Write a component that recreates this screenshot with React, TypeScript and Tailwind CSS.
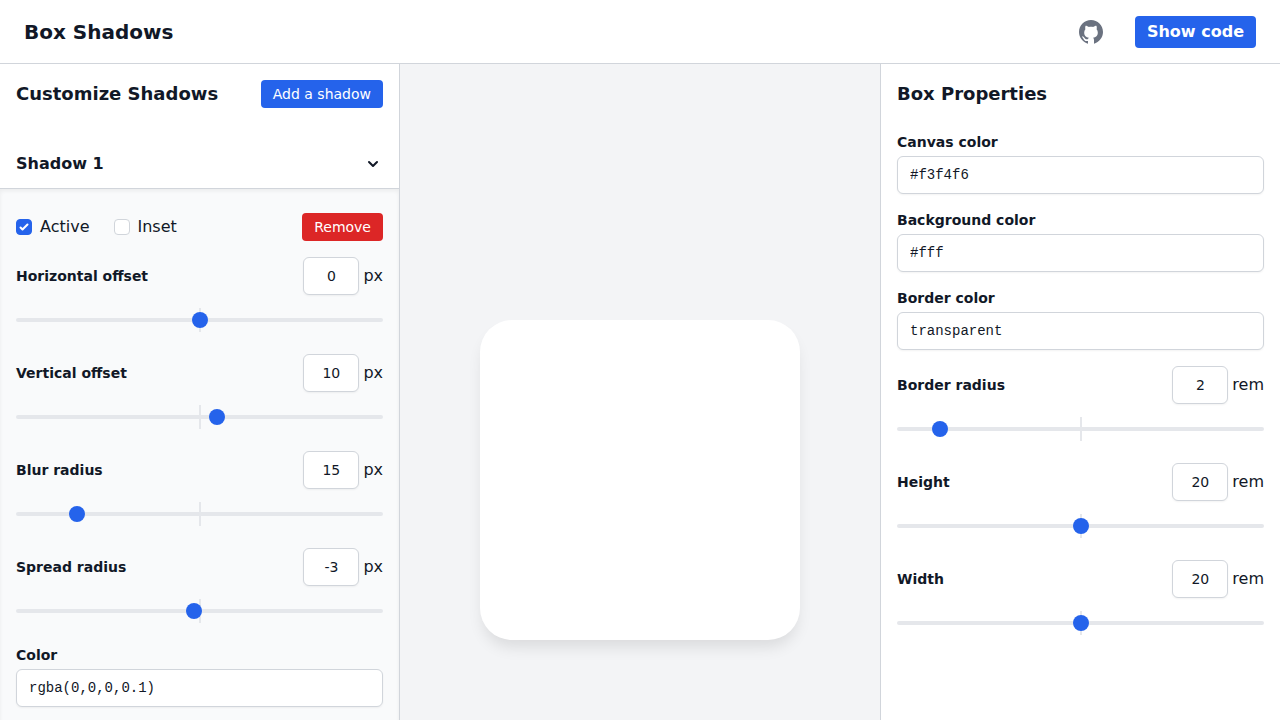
import React, { useId, useState } from "react";

type Shadow = {
  active: boolean;
  inset: boolean;
  x: number;
  y: number;
  blur: number;
  spread: number;
  color: string;
};

const defaultShadow: Shadow = {
  active: true,
  inset: false,
  x: 0,
  y: 10,
  blur: 15,
  spread: -3,
  color: "rgba(0,0,0,0.1)",
};

const toCss = (s: Shadow) =>
  `${s.inset ? "inset " : ""}${s.x}px ${s.y}px ${s.blur}px ${s.spread}px ${s.color}`;

const GithubIcon = () => (
  <svg className="h-6 w-6" viewBox="0 0 24 24" fill="currentColor" aria-hidden="true">
    <path d="M12 0C5.373 0 0 5.373 0 12c0 5.4 3.8 10.3 9 11.8v-2.9c-3 .6-4-.9-4.6-2.2-.3-.7-.8-1.2-1.3-1.6-.3-.3-.2-.6.3-.6 1 0 1.7.7 2.2 1.5.7 1.2 1.9 1.7 3.5 1.1.1-.6.4-1.1.8-1.4-2.8-.5-4.7-1.8-4.7-5.3 0-1.3.4-2.3 1.2-3.2-.3-1-.3-2.2.2-3.4 1.2 0 2.3.6 3.2 1.3 1.400-.4 3-.4 4.400 0 .9-.7 2-1.300 3.200-1.300.5 1.200.5 2.400.200 3.400.8.900 1.200 1.900 1.200 3.200 0 3.500-1.900 4.800-4.700 5.300.6.500.9 1.300.9 2.300v3.800c5.200-1.500 9-6.400 9-11.800 0-6.627-5.373-12-12-12z" />
  </svg>
);

type CheckboxProps = {
  label: string;
  checked: boolean;
  onChange: (checked: boolean) => void;
};

const Checkbox = ({ label, checked, onChange }: CheckboxProps) => (
  <label className="flex items-center gap-2">
    <span className="relative flex h-4 w-4">
      <input
        type="checkbox"
        className="h-4 w-4 appearance-none rounded border border-[#d1d5db] bg-white checked:border-[#2563eb] checked:bg-[#2563eb]"
        checked={checked}
        onChange={(e) => onChange(e.target.checked)}
      />
      {checked && (
        <svg
          className="pointer-events-none absolute inset-0 h-4 w-4 text-white"
          viewBox="0 0 16 16"
          fill="currentColor"
          aria-hidden="true"
        >
          <path d="M12.207 4.793a1 1 0 010 1.414l-5 5a1 1 0 01-1.414 0l-2-2a1 1 0 011.414-1.414L6.5 9.086l4.293-4.293a1 1 0 011.414 0z" />
        </svg>
      )}
    </span>
    {label}
  </label>
);

type TextFieldProps = {
  label: string;
  value: string;
  onChange: (value: string) => void;
};

const TextField = ({ label, value, onChange }: TextFieldProps) => {
  const id = useId();

  return (
    <div className="flex flex-col gap-1">
      <label htmlFor={id} className="text-sm font-bold">
        {label}
      </label>
      <input
        id={id}
        type="text"
        className="w-full rounded-md border border-[#d1d5db] bg-white px-3 py-2 font-['Liberation_Mono',monospace] text-sm shadow-xs"
        value={value}
        onChange={(e) => onChange(e.target.value)}
      />
    </div>
  );
};

type SliderFieldProps = {
  label: string;
  unit: string;
  min: number;
  max: number;
  value: number;
  onChange: (value: number) => void;
};

const SliderField = ({ label, unit, min, max, value, onChange }: SliderFieldProps) => {
  const id = useId();

  return (
    <div className="pb-[5px]">
      <div className="flex items-center justify-between">
        <label htmlFor={id} className="text-sm font-bold">
          {label}
        </label>
        <div className="flex items-center gap-1">
          <input
            id={id}
            type="text"
            inputMode="numeric"
            className="w-14 rounded-md border border-[#d1d5db] bg-white px-3 py-2 text-center text-sm shadow-xs"
            value={value}
            onChange={(e) => onChange(Number(e.target.value) || 0)}
          />
          <span>{unit}</span>
        </div>
      </div>
      <div className="relative mt-3 flex h-[26px] items-center">
        {/* center mark */}
        <div className="absolute inset-0 flex items-center justify-center">
          <div className="h-6 w-[2px] bg-[#e5e7eb]" />
        </div>
        <input
          type="range"
          aria-label={label}
          className="relative h-1 w-full appearance-none rounded bg-[#e5e7eb] [&::-webkit-slider-thumb]:h-4 [&::-webkit-slider-thumb]:w-4 [&::-webkit-slider-thumb]:appearance-none [&::-webkit-slider-thumb]:rounded-full [&::-webkit-slider-thumb]:bg-[#2563eb]"
          min={min}
          max={max}
          value={value}
          onChange={(e) => onChange(Number(e.target.value))}
        />
      </div>
    </div>
  );
};

type ShadowPanelProps = {
  index: number;
  shadow: Shadow;
  onChange: (patch: Partial<Shadow>) => void;
  onRemove: () => void;
};

const ShadowPanel = ({ index, shadow, onChange, onRemove }: ShadowPanelProps) => {
  const [open, setOpen] = useState(true);

  return (
    <>
      <button
        type="button"
        className="flex w-full items-center justify-between border-b border-[#d1d5db] px-4 py-3 font-bold"
        aria-expanded={open}
        onClick={() => setOpen(!open)}
      >
        Shadow {index + 1}
        <svg className="h-5 w-5" viewBox="0 0 20 20" fill="currentColor" aria-hidden="true">
          <path
            fillRule="evenodd"
            clipRule="evenodd"
            d="M5.293 7.293a1 1 0 011.414 0L10 10.586l3.293-3.293a1 1 0 111.414 1.414l-4 4a1 1 0 01-1.414 0l-4-4a1 1 0 010-1.414z"
          />
        </svg>
      </button>
      {open && (
        <div className="flex grow flex-col gap-4 bg-[#f9fafb] px-4 py-6 shadow-[inset_0_2px_4px_0_rgba(0,0,0,0.06)]">
          <div className="flex items-center justify-between">
            <div className="flex gap-6">
              <Checkbox
                label="Active"
                checked={shadow.active}
                onChange={(active) => onChange({ active })}
              />
              <Checkbox
                label="Inset"
                checked={shadow.inset}
                onChange={(inset) => onChange({ inset })}
              />
            </div>
            <button
              type="button"
              className="rounded bg-[#dc2626] px-3 py-1 text-sm text-white"
              onClick={onRemove}
            >
              Remove
            </button>
          </div>
          <SliderField
            label="Horizontal offset"
            unit="px"
            min={-100}
            max={100}
            value={shadow.x}
            onChange={(x) => onChange({ x })}
          />
          <SliderField
            label="Vertical offset"
            unit="px"
            min={-100}
            max={100}
            value={shadow.y}
            onChange={(y) => onChange({ y })}
          />
          <SliderField
            label="Blur radius"
            unit="px"
            min={0}
            max={100}
            value={shadow.blur}
            onChange={(blur) => onChange({ blur })}
          />
          <SliderField
            label="Spread radius"
            unit="px"
            min={-100}
            max={100}
            value={shadow.spread}
            onChange={(spread) => onChange({ spread })}
          />
          <TextField
            label="Color"
            value={shadow.color}
            onChange={(color) => onChange({ color })}
          />
        </div>
      )}
    </>
  );
};

const App = () => {
  const [shadows, setShadows] = useState<Shadow[]>([defaultShadow]);
  const [canvasColor, setCanvasColor] = useState("#f3f4f6");
  const [background, setBackground] = useState("#fff");
  const [borderColor, setBorderColor] = useState("transparent");
  const [radius, setRadius] = useState(2);
  const [height, setHeight] = useState(20);
  const [width, setWidth] = useState(20);

  const updateShadow = (index: number, patch: Partial<Shadow>) =>
    setShadows(shadows.map((s, i) => (i === index ? { ...s, ...patch } : s)));

  return (
    <div className="flex min-h-screen flex-col bg-white font-['DejaVu_Sans',sans-serif] text-[#111827]">
      <header className="flex items-center justify-between border-b border-[#d1d5db] px-6 pt-4 pb-[15px]">
        <h1 className="text-xl font-bold">Box Shadows</h1>
        <div className="flex items-center gap-8">
          <a href="#github" aria-label="GitHub" className="text-[#6b7280]">
            <GithubIcon />
          </a>
          <button type="button" className="rounded bg-[#2563eb] px-3 py-1 font-bold text-white">
            Show code
          </button>
        </div>
      </header>

      <div className="grid grow grid-cols-[400px_1fr_400px]">
        <aside className="flex flex-col border-r border-[#d1d5db]">
          <div className="mb-4 flex items-center justify-between p-4">
            <h2 className="text-lg font-bold">Customize Shadows</h2>
            <button
              type="button"
              className="rounded bg-[#2563eb] px-3 py-1 text-sm text-white"
              onClick={() => setShadows([...shadows, defaultShadow])}
            >
              Add a shadow
            </button>
          </div>
          {shadows.map((shadow, i) => (
            <ShadowPanel
              key={i}
              index={i}
              shadow={shadow}
              onChange={(patch) => updateShadow(i, patch)}
              onRemove={() => setShadows(shadows.filter((_, j) => j !== i))}
            />
          ))}
        </aside>

        <main
          className="flex items-center justify-center py-64"
          style={{ backgroundColor: canvasColor }}
        >
          <div
            className="border"
            style={{
              width: `${width}rem`,
              height: `${height}rem`,
              borderRadius: `${radius}rem`,
              borderColor,
              backgroundColor: background,
              boxShadow: shadows.filter((s) => s.active).map(toCss).join(", "),
            }}
          />
        </main>

        <aside className="border-l border-[#d1d5db] p-4">
          <h2 className="text-lg font-bold">Box Properties</h2>
          <div className="mt-6 flex flex-col gap-4">
            <TextField label="Canvas color" value={canvasColor} onChange={setCanvasColor} />
            <TextField label="Background color" value={background} onChange={setBackground} />
            <TextField label="Border color" value={borderColor} onChange={setBorderColor} />
            <SliderField
              label="Border radius"
              unit="rem"
              min={0}
              max={20}
              value={radius}
              onChange={setRadius}
            />
            <SliderField
              label="Height"
              unit="rem"
              min={0}
              max={40}
              value={height}
              onChange={setHeight}
            />
            <SliderField
              label="Width"
              unit="rem"
              min={0}
              max={40}
              value={width}
              onChange={setWidth}
            />
          </div>
        </aside>
      </div>
    </div>
  );
};

export default App;
